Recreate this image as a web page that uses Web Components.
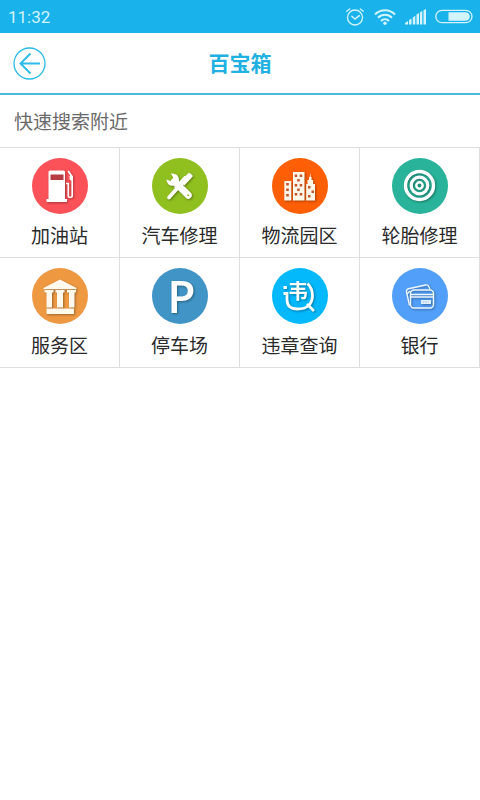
<!DOCTYPE html>
<html lang="zh-CN">
<head>
<meta charset="utf-8">
<meta name="viewport" content="width=device-width, initial-scale=1">
<title>百宝箱</title>
<style>
body { margin: 0; background: #fff; color: #2a2a2a; font-family: Roboto, "Noto Sans CJK SC", sans-serif; }
</style>
</head>
<body>
<toolbox-page></toolbox-page>
<script>
const define = (name, html, setup) => {
  const tpl = document.createElement('template');
  tpl.innerHTML = html;
  customElements.define(name, class extends HTMLElement {
    constructor() {
      super();
      this.attachShadow({ mode: 'open' }).append(tpl.content.cloneNode(true));
    }
    connectedCallback() { if (setup) setup(this); }
  });
};

define('status-bar', `
<style>
:host { display: flex; align-items: center; justify-content: space-between; box-sizing: border-box; height: 33px; padding: 0 7px 0 8px; background: #19b2ea; color: #d3f4ff; font-size: 17px; line-height: 20px; }
div { display: flex; align-items: center; gap: 9px; }
time { padding-top: 1px; }
svg { display: block; }
</style>
<time>11:32</time>
<div>
  <svg width="20" height="20" viewBox="0 0 20 20" fill="none" stroke="currentColor" stroke-width="1.3" stroke-linecap="round"><circle cx="10" cy="10.500" r="7.500"/><path d="M1.700 4.200 4.700 1.900M18.300 4.200 15.300 1.900"/><path d="M6.800 9.200 10 12l4.300-3.400" stroke-width="1.500"/></svg>
  <svg width="22" height="18" viewBox="0 0 22 18" fill="none" stroke="currentColor" stroke-width="2.100"><path d="M1 6.500C6.500.8 15.500.8 21 6.500M4 9.800c4-4 10-4 14 0M7 13c2.300-2.300 5.700-2.300 8 0"/><circle cx="11" cy="15.300" r="1.700" fill="currentColor" stroke="none"/></svg>
  <svg width="21" height="16" viewBox="0 0 21 16" fill="currentColor"><path d="M0 15.500v-1.500l3-2v3.500zM4 15.500v-4.500l2.500-1.500v6zM7.800 15.500v-7l2.500-1.800v8.800zM11.500 15.500v-10l2.500-1.600v11.600zM15 15.500v-12.300l2.300-1.200v13.500zM18.500 15.500v-14.200l2.500-1.300v15.500z"/></svg>
  <svg width="38" height="15" viewBox="0 0 38 15"><rect x=".8" y="1.300" width="36.200" height="12.400" rx="6.200" fill="none" stroke="currentColor" stroke-width="1.300"/><path d="M13.500 3.200h17a4.300 4.300 0 0 1 0 8.600h-17z" fill="currentColor"/></svg>
</div>`);

define('title-bar', `
<style>
:host { display: grid; grid-template-columns: 1fr auto 1fr; align-items: center; height: 60px; padding: 0 13px; border-bottom: 2px solid #4cb8dc; background: #fff; }
button { justify-self: start; padding: 0; border: 0; background: none; color: #2bbce9; cursor: pointer; }
svg { display: block; }
h1 { margin: 0; padding-top: 2px; color: #20b0e2; font-size: 21px; line-height: 30px; font-weight: 700; }
</style>
<button type="button" aria-label="返回"><svg width="33" height="33" viewBox="0 0 33 33" fill="none" stroke="currentColor"><circle cx="16.500" cy="16.500" r="15.500" stroke-width="1.300"/><path d="M27 16.500H7.500M17.500 6.500 7.500 16.500l10 10" stroke-width="1.900"/></svg></button>
<h1><slot></slot></h1>`);

define('section-title', `
<style>
:host { display: block; padding: 15px 14px 11px; }
h2 { margin: 0; color: #6a6a6a; font-size: 19px; line-height: 26px; font-weight: 400; }
</style>
<h2><slot></slot></h2>`);

define('tool-grid', `
<style>
:host { display: grid; grid-template-columns: repeat(4, 1fr); border-top: 1px solid #dedede; }
</style>
<slot></slot>`);

const icons = {
  fuel: ['#fb5158', `<path fill="#fff" fill-rule="evenodd" d="M18 12.500h13.500q1.500 0 1.500 1.500v27h2v3H14.500v-3h2V14q0-1.500 1.500-1.500z"/><path fill="#b73b43" d="M18.500 16.500h13v5.500h-13z"/><path d="M34 25.500h2.300v12.500q0 1.200 1.200 1.200h1.500q1.200 0 1.200-1.200V19l-4-6" fill="none" stroke="#fff" stroke-width="1.600"/><path fill="#fff" d="M37 13.500l4 5v5l-3.500-2v-3.500l1-1z"/>`],
  tools: ['#90bf20', `<path d="M34.500 19.500 24 31" stroke="#fff" stroke-width="5"/><path d="M25 30.500 17 39.500" stroke="#fff" stroke-width="3.600" stroke-linecap="round"/><path fill="#fff" d="M28.500 23l7.500-7.500q.8-.8 2-.2l2.300 1.700q.8.800 0 2l-8 8.500z"/><path d="M22.500 23.500 36.300 37.300" stroke="#fff" stroke-width="7" stroke-linecap="round"/><path d="M18.800 15.500q7.700-.7 8.200 6.300-.4 5.700-6 6-6 .1-6.600-6.300l4.300 1.500 2.800-3z" fill="#fff"/><circle cx="36.200" cy="37.200" r="1" fill="#90bf20"/>`],
  city: ['#fd5e06', `<path fill="#fff8ea" d="M12.300 23h7v19.500h-7zM21 14h11.500v28.500H21zM34.200 42.500V26h1.300v-4h1.500v-3h.8l.5-4.500.5 4.500h.8v3h1.500v4H43v16.500z"/><path fill="#c6532b" d="M14.200 25h2.600v2.600h-2.600zm0 5.500h2.600v2.600h-2.600zm0 5.500h2.600v2.600h-2.600zM22.700 16.500h2.500V19h-2.500zm5 0h2.500V19h-2.500zM25.200 21h2.500v2.500h-2.500zm-2.500 5h2.500v2.500h-2.500zm5 0h2.500v2.500h-2.500zm-2.500 4.500h2.500V33h-2.500zm-2.500 4.500h2.500v2.500h-2.500zm5 0h2.500v2.500h-2.500zM36 28h2.500v2.500H36zm3.500 4.500H42V35h-2.500zM36 37h2.500v2.500H36z"/>`],
  tyre: ['#29b39a', `<g fill="none" stroke="#fff"><circle cx="27.500" cy="27.500" r="14" stroke-width="3.400"/><circle cx="27.500" cy="27.500" r="8.300" stroke-width="3.200"/><circle cx="27.500" cy="27.500" r="3.200" stroke-width="2.400"/></g>`],
  service: ['#ee9942', `<path fill="#fff9ed" d="M28 11.500 44.500 20v1.300H11.500V20zM12.500 22h9v2.500h-1.500V39.500h-5.500V24.500h-2zM23.500 22h9v2.500h-1.500v15h-6v-15h-1.500zM35 22H44v2.500h-1.500v15h-5.500v-15h-2zM14.500 40.500H42V46H14.500z"/>`],
  parking: ['#4094c6', `<text x="29.500" y="45" text-anchor="middle" font-family="Open Sans, sans-serif" font-weight="600" font-size="46" fill="#fff">P</text>`],
  query: ['#03b8fb', `<text x="26" y="31" text-anchor="middle" font-family="Noto Sans CJK SC, sans-serif" font-weight="700" font-size="20" fill="#fff">韦</text><path d="M11.500 19.500h3.500M11.500 25.500h3.500v6q0 9.500 10.500 9.500 14 0 15-12.500.2-8-5-13M35 36l7 7" fill="none" stroke="#fff" stroke-width="2.800"/>`],
  bank: ['#529ffa', `<g fill="none" stroke="#edf7ff" stroke-width="1.400"><path d="M17.500 37.500 14.500 24q-.5-2.500 2-3.300L33.500 17q2.500-.5 3.300 1.500L38 21"/><path d="M15 26l3-3"/><rect x="18.500" y="22" width="23" height="18" rx="3.500"/><path d="M18.500 26.500h23M18.500 29h23"/></g><rect x="29" y="32" width="10" height="4" rx=".5" fill="#e3f1ff"/><path d="M30.500 34h6.500" stroke="#8fbff8" stroke-width="1" stroke-dasharray="2 1"/>`]
};

define('tool-item', `
<style>
:host { display: block; border-right: 1px solid #dedede; border-bottom: 1px solid #dedede; }
button { display: flex; flex-direction: column; align-items: center; gap: 10px; width: 100%; padding: 10px 0 8px; border: 0; background: none; color: inherit; font: inherit; font-size: 19px; line-height: 25px; white-space: nowrap; cursor: pointer; }
svg { display: block; overflow: visible; }
.art { filter: drop-shadow(1px 1px 1px rgb(0 0 0 / 0.350)); }
</style>
<button type="button"><svg width="56" height="56" viewBox="0 0 56 56" aria-hidden="true"><circle cx="28" cy="28" r="28"/><g class="art"></g></svg><span><slot></slot></span></button>`,
host => {
  const [color, art] = icons[host.getAttribute('icon')];
  host.shadowRoot.querySelector('circle').setAttribute('fill', color);
  host.shadowRoot.querySelector('.art').innerHTML = art;
});

define('toolbox-page', `
<style>:host { display: block; }</style>
<status-bar></status-bar>
<title-bar>百宝箱</title-bar>
<main>
  <section-title>快速搜索附近</section-title>
  <tool-grid>
    <tool-item icon="fuel">加油站</tool-item>
    <tool-item icon="tools">汽车修理</tool-item>
    <tool-item icon="city">物流园区</tool-item>
    <tool-item icon="tyre">轮胎修理</tool-item>
    <tool-item icon="service">服务区</tool-item>
    <tool-item icon="parking">停车场</tool-item>
    <tool-item icon="query">违章查询</tool-item>
    <tool-item icon="bank">银行</tool-item>
  </tool-grid>
</main>`);
</script>
</body>
</html>
